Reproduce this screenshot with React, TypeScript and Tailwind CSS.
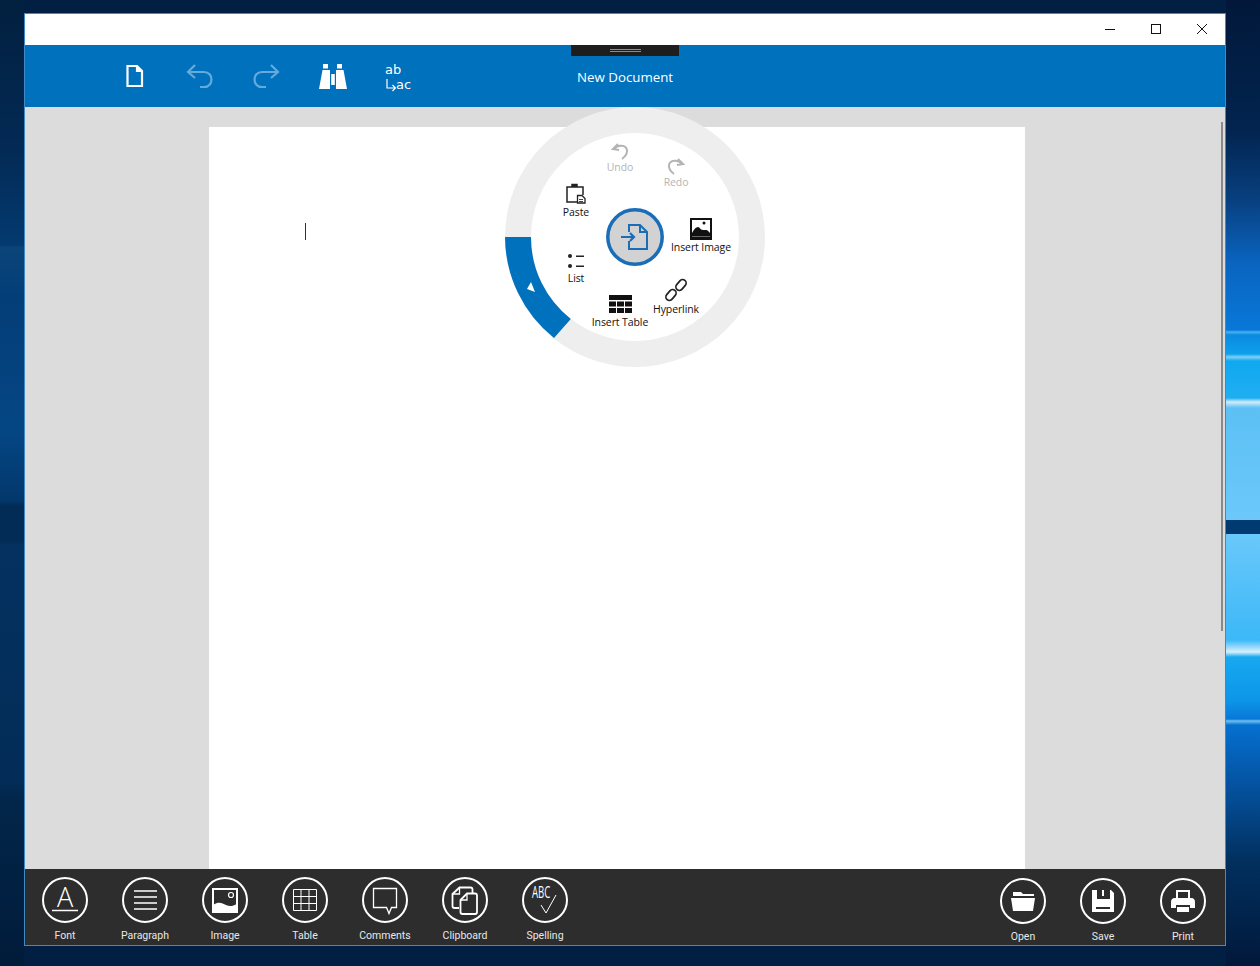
import type { ReactNode } from "react";

const font = "font-['Open_Sans','Liberation_Sans',sans-serif]";

function RoundIcon({ children }: { children: ReactNode }) {
  return (
    <svg width="46" height="46" viewBox="0 0 46 46" fill="none" stroke="white">
      <circle cx="23" cy="23" r="22" strokeWidth="2" />
      {children}
    </svg>
  );
}

function BarItem({ label, icon, low }: { label: string; icon: ReactNode; low?: boolean }) {
  return (
    <div className={`w-[80px] flex flex-col items-center ${low ? "pt-[9px]" : "pt-2"}`}>
      {icon}
      <span className="mt-[5px] text-[10.5px] leading-[15px] text-[#e8e8e8] font-['Roboto',sans-serif]">{label}</span>
    </div>
  );
}

function RadialItem({ label, className, icon, off }: { label: string; className: string; icon: ReactNode; off?: boolean }) {
  return (
    <div className={`absolute w-[80px] flex flex-col items-center ${className}`}>
      {icon}
      <span className={`text-[10.5px] leading-[14px] tracking-[-0.1px] ${off ? "text-[#b4b4b4]" : "text-[#111]"}`}>{label}</span>
    </div>
  );
}

export default function App() {
  return (
    <div className={`w-[1260px] h-[966px] flex overflow-hidden bg-[#011f42] ${font}`}>
      {/* wallpaper left */}
      <div className="w-[24px] h-full bg-[linear-gradient(180deg,#02203f_0px,#032a55_150px,#033a70_245px,#0a4478_247px,#043e78_300px,#044684_430px,#03386c_500px,#022b55_506px,#022b55_540px,#033160_545px,#032d58_780px,#02264a_800px,#011b3a_966px)]" />

      {/* window */}
      <div className="w-[1202px] h-[933px] mt-[13px] flex flex-col border border-[#3f8ac6]">
        <div className="h-[31px] bg-white flex justify-end items-center pr-[18px] gap-[36px] shrink-0">
          <svg width="10" height="10" viewBox="0 0 10 10" stroke="#111" fill="none" className="mt-[-1px]"><path d="M0 5.500h10" /></svg>
          <svg width="10" height="10" viewBox="0 0 10 10" stroke="#111" fill="none" className="mt-[-1px]"><rect x=".5" y=".5" width="9" height="9" /></svg>
          <svg width="10" height="10" viewBox="0 0 10 10" stroke="#111" fill="none" className="mt-[-1px]"><path d="M0 0l10 10M10 0L0 10" /></svg>
        </div>

        {/* blue toolbar */}
        <div className="relative h-[62px] bg-[#0071bc] flex items-center pl-[100px] shrink-0">
          <svg width="20" height="24" viewBox="0 0 20 24" fill="none" stroke="white" strokeWidth="2.2">
            <path d="M2.500 2h9.500l5 5v15h-14.500z" />
            <path d="M12 2v5h5" fill="white" />
          </svg>
          <svg className="ml-[41px]" width="30" height="26" viewBox="0 0 30 26" fill="none" stroke="#66aadc" strokeWidth="2.2">
            <path d="M9 2L2 9l7 6" />
            <path d="M2 9h16c10 0 10 15 0 15h-4" />
          </svg>
          <svg className="ml-[34px]" width="30" height="26" viewBox="0 0 30 26" fill="none" stroke="#66aadc" strokeWidth="2.2">
            <path d="M21 2l7 7-7 6" />
            <path d="M28 9H12C2 9 2 24 12 24h4" />
          </svg>
          <svg className="ml-[39px]" width="28" height="26" viewBox="0 0 28 26" fill="white">
            <path d="M4 1h5v4.500H4zM18 1h5v4.500h-5zM3.500 7H11v19H0zM24.500 7H17v19H28z" />
            <path d="M12.200 11h3.600v11h-3.600z" />
          </svg>
          <div className="ml-[38px] mt-[1px] w-[28px] flex flex-col text-white text-[13px] leading-[15px] font-['DejaVu_Sans',sans-serif]">
            <span>ab</span>
            <span className="flex items-end">
              <svg width="11" height="13" viewBox="0 0 11 13" fill="none" stroke="white" strokeWidth="1.200">
                <path d="M2 0v9h8M7.500 6l3 3-3 3" />
              </svg>
              ac
            </span>
          </div>
          <span className="ml-[164px] mt-[3px] text-white text-[13.3px]">New Document</span>
          {/* drag handle */}
          <div className="absolute top-0 left-[546px] w-[108px] h-[11px] bg-[#1e1e1e] flex flex-col items-center pt-[4px] gap-[1px]">
            <div className="w-[31px] h-px bg-[#8c8c8c]" />
            <div className="w-[31px] h-px bg-[#8c8c8c]" />
          </div>
        </div>

        {/* document area */}
        <div className="relative flex-1 bg-[#dcdcdc] flex overflow-hidden pt-[20px] pl-[184px]">
          <div className="relative w-[816px] h-full bg-white">
            <div className="absolute left-[96px] top-[96px] w-px h-[17px] bg-[#333]" />
          </div>
          <div className="absolute right-[2px] top-[15px] w-[2px] h-[509px] bg-[#8a8a8a]" />

          {/* radial menu */}
          <div className="absolute left-[480px] top-0 w-[260px] h-[260px]">
            <svg className="absolute inset-0" width="260" height="260" viewBox="0 0 260 260">
              <circle cx="130" cy="130" r="130" fill="#eeeeee" />
              <circle cx="130" cy="130" r="104" fill="white" />
              <path d="M0 130A130 130 0 0 0 49 231L65.800 212A104 104 0 0 1 26 130Z" fill="#0071bc" />
              <path d="M26 175l-4 7 8 3z" fill="white" />
              <circle cx="130" cy="130" r="27.200" fill="#d2d2d2" stroke="#1a6eb8" strokeWidth="3.500" />
              <path d="M124 125V118H135L142 125V142H124V134" fill="none" stroke="#1a6eb8" strokeWidth="2" />
              <path d="M135 118V125H142" fill="none" stroke="#1a6eb8" strokeWidth="2" />
              <path d="M116 130h13M125 126l4 4-4 4" fill="none" stroke="#1a6eb8" strokeWidth="2.200" />
            </svg>

            <RadialItem
              off
              label="Undo"
              className="left-[75px] top-[36px]"
              icon={
                <svg width="18" height="17" viewBox="0 0 18 17" fill="none" stroke="#b4b4b4" strokeWidth="2">
                  <path d="M7 1L2 6l6 1" />
                  <path d="M3 6c4-5 12-4 13 1 .5 3-1 6-5 9" />
                </svg>
              }
            />
            <RadialItem
              off
              label="Redo"
              className="left-[131px] top-[51px]"
              icon={
                <svg width="18" height="17" viewBox="0 0 18 17" fill="none" stroke="#b4b4b4" strokeWidth="2">
                  <path d="M11 1l5 5-6 1" />
                  <path d="M15 6C11 1 3 2 2 7c-.5 3 1 6 5 9" />
                </svg>
              }
            />
            <RadialItem
              label="Paste"
              className="left-[31px] top-[76px]"
              icon={
                <svg width="22" height="22" viewBox="0 0 22 22" fill="none" stroke="#222" strokeWidth="1.500">
                  <path d="M12 19H2V4h16v8" />
                  <path d="M7 4V1.500h5V4" fill="#222" />
                  <path d="M12.500 12.500h4.500l3 3v4.500h-7.500z" fill="white" strokeWidth="1.300" />
                  <path d="M14 16.500h4M14 18.500h4" stroke="#444" strokeWidth="1" />
                </svg>
              }
            />
            <RadialItem
              label="Insert Image"
              className="left-[156px] top-[111px]"
              icon={
                <svg width="22" height="22" viewBox="0 0 22 22">
                  <rect width="22" height="22" fill="#111" />
                  <rect x="2" y="2" width="18" height="14" fill="white" />
                  <path d="M2 15c2-4 4-6 6-6s2 3 5 3 4-1 7 3v2H2z" fill="#111" />
                  <circle cx="14" cy="5" r="1.500" fill="#111" />
                  <path d="M2 18.500h18" stroke="#666" />
                </svg>
              }
            />
            <RadialItem
              label="List"
              className="left-[31px] top-[146px]"
              icon={
                <svg width="18" height="18" viewBox="0 0 18 18" fill="#222">
                  <circle cx="3" cy="3" r="2" />
                  <circle cx="3" cy="13" r="2" />
                  <rect x="9" y="2.500" width="8" height="1.500" />
                  <rect x="9" y="12.500" width="8" height="1.500" />
                </svg>
              }
            />
            <RadialItem
              label="Hyperlink"
              className="left-[131px] top-[171px]"
              icon={
                <svg width="24" height="24" viewBox="0 0 24 24" fill="none" stroke="#222" strokeWidth="1.700">
                  <rect x="-6" y="-3.500" width="12" height="7" rx="3.500" transform="translate(7 17) rotate(-50)" />
                  <rect x="-6" y="-3.500" width="12" height="7" rx="3.500" transform="translate(17 7) rotate(-50)" />
                </svg>
              }
            />
            <RadialItem
              label="Insert Table"
              className="left-[75px] top-[188px]"
              icon={
                <svg width="23" height="20" viewBox="0 0 23 20" fill="#111">
                  <rect width="23" height="5" />
                  <rect y="6.500" width="7" height="5" />
                  <rect x="8" y="6.500" width="7" height="5" />
                  <rect x="16" y="6.500" width="7" height="5" />
                  <rect y="13" width="7" height="5" />
                  <rect x="8" y="13" width="7" height="5" />
                  <rect x="16" y="13" width="7" height="5" />
                </svg>
              }
            />
          </div>
        </div>

        {/* bottom bar */}
        <div className="h-[76px] bg-[#2d2d2d] flex justify-between pr-[2px] shrink-0">
          <div className="flex">
            <BarItem
              label="Font"
              icon={
                <RoundIcon>
                  <text x="23" y="30" textAnchor="middle" fontSize="27" fontWeight="300" fill="white" stroke="none">A</text>
                  <path d="M10 33.500h26" strokeWidth="1.500" />
                </RoundIcon>
              }
            />
            <BarItem
              label="Paragraph"
              icon={
                <RoundIcon>
                  <path d="M12 14h23M12 20h23M12 26h23M12 32h23" strokeWidth="1.500" />
                </RoundIcon>
              }
            />
            <BarItem
              label="Image"
              icon={
                <RoundIcon>
                  <rect x="11" y="12" width="24" height="23" strokeWidth="2" />
                  <path d="M11 28c6-4 9-2 13 0s7 1 11-1v8H11z" fill="white" stroke="none" />
                  <circle cx="29" cy="18" r="2.500" strokeWidth="1.200" />
                </RoundIcon>
              }
            />
            <BarItem
              label="Table"
              icon={
                <RoundIcon>
                  <path d="M11.500 12.500h23v21h-23zM11.500 19.500h23M11.500 26.500h23M19 12.500v21M27 12.500v21" strokeWidth="1" />
                </RoundIcon>
              }
            />
            <BarItem
              label="Comments"
              icon={
                <RoundIcon>
                  <path d="M11.500 11.500h23v19h-5l-2.500 6-2.500-6h-13z" strokeWidth="1.300" />
                </RoundIcon>
              }
            />
            <BarItem
              label="Clipboard"
              icon={
                <RoundIcon>
                  <path d="M17 31h-4.500a2 2 0 0 1-2-2V17l7-6.500h11a2 2 0 0 1 2 2V16" strokeWidth="1.800" />
                  <path d="M18.500 23l6.500-6.500h8a2 2 0 0 1 2 2V35a2 2 0 0 1-2 2h-12.500a2 2 0 0 1-2-2z" strokeWidth="1.800" />
                  <path d="M10.500 17h7v-6.500M18.500 23h6.500v-6.500" strokeWidth="1.300" />
                </RoundIcon>
              }
            />
            <BarItem
              label="Spelling"
              icon={
                <RoundIcon>
                  <text x="0" y="0" transform="translate(10 21) scale(.6 1)" fontSize="16" fill="white" stroke="none">ABC</text>
                  <path d="M19 28l5 8 10-18" strokeWidth="1" />
                </RoundIcon>
              }
            />
          </div>
          <div className="flex">
            <BarItem
              low
              label="Open"
              icon={
                <RoundIcon>
                  <path d="M13 14h8l2 2h11v2H13z" fill="white" stroke="none" />
                  <path d="M11 20h24l-2 13H13z" fill="white" stroke="none" />
                </RoundIcon>
              }
            />
            <BarItem
              low
              label="Save"
              icon={
                <RoundIcon>
                  <path d="M12 12h5v9h13v-9h1l3 3v19H12z" fill="white" stroke="none" />
                  <path d="M22 12h2v6h-2z" fill="white" stroke="none" />
                  <path d="M16 29h14v2H16z" fill="#2d2d2d" stroke="none" />
                </RoundIcon>
              }
            />
            <BarItem
              low
              label="Print"
              icon={
                <RoundIcon>
                  <path d="M17 13h12v8h-12z" strokeWidth="2" />
                  <path d="M15 20h16c3 0 4 2 4 4v6h-5v-3H16v3h-5v-6c0-2 1-4 4-4z" fill="white" stroke="none" />
                  <path d="M17 29h12v5H17z" fill="white" stroke="none" />
                </RoundIcon>
              }
            />
          </div>
        </div>
      </div>

      {/* wallpaper right */}
      <div className="flex-1 h-full bg-[linear-gradient(180deg,#01183a_0px,#02244f_130px,#08407f_200px,#0a64c0_263px,#0878d8_330px,#4ab0f0_332px,#0a8ae0_335px,#0ea0ec_354px,#7fd0f5_357px,#10a8f0_361px,#20aef2_398px,#d0eefc_402px,#5cc0f5_408px,#6cc8fa_520px,#013a70_520px,#013a70_534px,#6ac8fa_534px,#3cb8f8_640px,#d8f0fc_652px,#18a8f0_657px,#0c96e8_700px,#0878d8_719px,#70c0f0_721px,#0570d0_725px,#04509c_790px,#02305f_860px,#01183a_966px)]" />
    </div>
  );
}
